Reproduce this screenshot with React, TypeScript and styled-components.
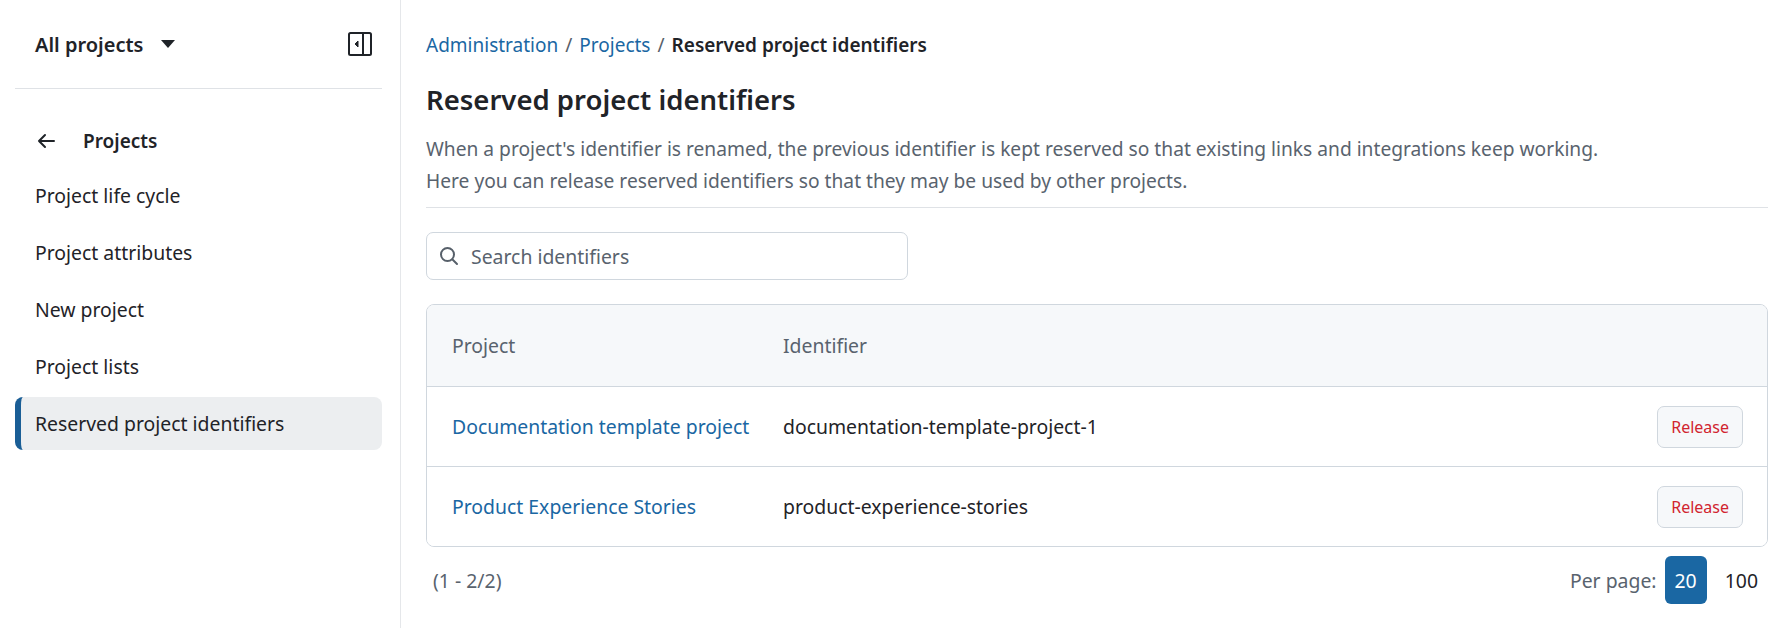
import React from "react";
import styled, { createGlobalStyle } from "styled-components";

const Global = createGlobalStyle`
  html, body { margin: 0; padding: 0; background: #fff; }
  body { font-family: "Noto Sans", "Open Sans", sans-serif; color: #1f2328; }
  * { box-sizing: border-box; }
`;

const Page = styled.div`
  display: flex;
  width: 1783px;
  height: 628px;
  overflow: hidden;
`;

const Sidebar = styled.aside`
  width: 401px;
  flex-shrink: 0;
  border-right: 1px solid #e5e7ea;
  padding: 0 18px 0 15px;
  display: flex;
  flex-direction: column;
`;

const SideHeader = styled.div`
  height: 89px;
  display: flex;
  align-items: center;
  justify-content: space-between;
  padding: 0 10px 0 20px;
  border-bottom: 1px solid #dfe2e6;
  font-size: 20px;
  font-weight: 600;
`;

const HeaderTitle = styled.div`
  display: flex;
  align-items: center;
  gap: 18px;
`;

const BackRow = styled.div`
  display: flex;
  align-items: center;
  gap: 28px;
  height: 48px;
  margin-top: 28px;
  padding-left: 22px;
  font-size: 19px;
  font-weight: 600;
`;

const NavItem = styled.div<{ $active?: boolean }>`
  height: 53px;
  margin-top: 4px;
  display: flex;
  align-items: center;
  font-size: 19.4px;
  border-radius: 8px;
  background: ${(p) => (p.$active ? "#eceef0" : "transparent")};
  border-left: ${(p) => (p.$active ? "6px solid #1a5e96" : "6px solid transparent")};
  padding-left: 14px;
`;

const Main = styled.main`
  flex: 1;
  padding: 0 15px 0 25px;
  display: flex;
  flex-direction: column;
`;

const Crumbs = styled.div`
  margin-top: 32px;
  font-size: 19px;
  display: flex;
  gap: 7px;
  color: #57606a;
`;

const Link = styled.span`
  color: #1a67a3;
`;

const Current = styled.span`
  color: #1f2328;
  font-weight: 600;
`;

const Title = styled.h1`
  margin: 23px 0 0;
  font-size: 27.5px;
  font-weight: 600;
  line-height: 38px;
`;

const Desc = styled.p`
  margin: 14px 0 0;
  font-size: 19.2px;
  line-height: 32px;
  color: #59636e;
  padding-bottom: 10px;
  border-bottom: 1px solid #dfe2e6;
`;

const Search = styled.div`
  margin-top: 24px;
  width: 482px;
  height: 48px;
  border: 1px solid #d0d7de;
  border-radius: 7px;
  display: flex;
  align-items: center;
  gap: 12px;
  padding-left: 12px;
  font-size: 19.4px;
  color: #59636e;
`;

const Table = styled.div`
  margin-top: 24px;
  border: 1px solid #d0d7de;
  border-radius: 8px;
  overflow: hidden;
`;

const Row = styled.div<{ $head?: boolean }>`
  display: grid;
  grid-template-columns: 331px 1fr auto;
  align-items: center;
  height: ${(p) => (p.$head ? "81px" : "80px")};
  padding: 0 24px 0 25px;
  font-size: 19.4px;
  background: ${(p) => (p.$head ? "#f6f8fa" : "#fff")};
  color: ${(p) => (p.$head ? "#59636e" : "#1f2328")};
  & + & { border-top: 1px solid #d0d7de; }
`;

const ReleaseBtn = styled.button`
  font-family: inherit;
  font-size: 16px;
  color: #d1242f;
  background: #f6f8fa;
  border: 1px solid #d0d7de;
  border-radius: 7px;
  height: 42px;
  padding: 0 13px;
`;

const Footer = styled.div`
  display: flex;
  justify-content: space-between;
  align-items: center;
  margin-top: 9px;
  font-size: 19.4px;
  color: #59636e;
`;

const Count = styled.span`
  padding-left: 7px;
`;

const PerPage = styled.div`
  display: flex;
  align-items: center;
  gap: 8px;
`;

const PageNum = styled.span<{ $active?: boolean }>`
  display: inline-flex;
  align-items: center;
  justify-content: center;
  padding: 0 10px;
  height: 48px;
  border-radius: 6px;
  background: ${(p) => (p.$active ? "#1a67a3" : "transparent")};
  color: ${(p) => (p.$active ? "#fff" : "#1f2328")};
`;

export default function App() {
  return (
    <Page>
      <Global />
      <Sidebar>
        <SideHeader>
          <HeaderTitle>
            All projects
            <svg width="14" height="8" viewBox="0 0 14 8"><path d="M0 0h14L7 8z" fill="#1f2328" /></svg>
          </HeaderTitle>
          <svg width="24" height="24" viewBox="0 0 24 24" fill="none" stroke="#1f2328" strokeWidth="2">
            <rect x="1" y="1" width="22" height="22" rx="1.5" />
            <line x1="15" y1="1" x2="15" y2="23" />
            <path d="M10 9l-3 3 3 3z" fill="#1f2328" strokeWidth="1" />
          </svg>
        </SideHeader>
        <BackRow>
          <svg width="18" height="16" viewBox="0 0 18 16" fill="none" stroke="#1f2328" strokeWidth="2" strokeLinecap="round" strokeLinejoin="round">
            <path d="M17 8H2M8 2L2 8l6 6" />
          </svg>
          Projects
        </BackRow>
        <NavItem>Project life cycle</NavItem>
        <NavItem>Project attributes</NavItem>
        <NavItem>New project</NavItem>
        <NavItem>Project lists</NavItem>
        <NavItem $active>Reserved project identifiers</NavItem>
      </Sidebar>
      <Main>
        <Crumbs>
          <Link>Administration</Link>/<Link>Projects</Link>/<Current>Reserved project identifiers</Current>
        </Crumbs>
        <Title>Reserved project identifiers</Title>
        <Desc>
          When a project's identifier is renamed, the previous identifier is kept reserved so that existing links and integrations keep working.
          <br />
          Here you can release reserved identifiers so that they may be used by other projects.
        </Desc>
        <Search>
          <svg width="20" height="20" viewBox="0 0 20 20" fill="none" stroke="#57606a" strokeWidth="2" strokeLinecap="round">
            <circle cx="8.5" cy="8.5" r="6.5" />
            <path d="M13.5 13.5L18 18" />
          </svg>
          Search identifiers
        </Search>
        <Table>
          <Row $head>
            <span>Project</span>
            <span>Identifier</span>
            <span />
          </Row>
          <Row>
            <Link>Documentation template project</Link>
            <span>documentation-template-project-1</span>
            <ReleaseBtn>Release</ReleaseBtn>
          </Row>
          <Row>
            <Link>Product Experience Stories</Link>
            <span>product-experience-stories</span>
            <ReleaseBtn>Release</ReleaseBtn>
          </Row>
        </Table>
        <Footer>
          <Count>(1 - 2/2)</Count>
          <PerPage>
            Per page:
            <PageNum $active>20</PageNum>
            <PageNum>100</PageNum>
          </PerPage>
        </Footer>
      </Main>
    </Page>
  );
}
